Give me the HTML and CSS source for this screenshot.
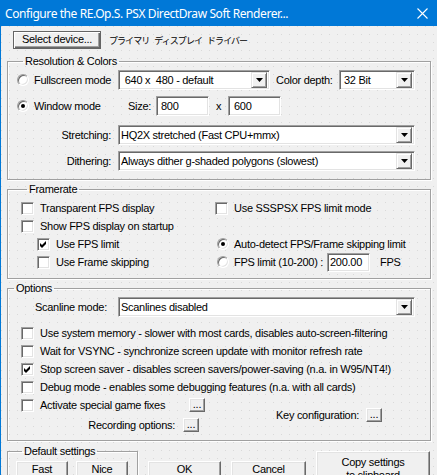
FILE: index.html
```html
<!DOCTYPE html>
<html lang="en">
<head>
<meta charset="utf-8">
<title>Configure</title>
<link rel="stylesheet" href="styles.css">
</head>
<body>
<div class="window">
  <div class="titlebar">
    <span class="title">Configure the RE.Op.S. PSX DirectDraw Soft Renderer...</span>
    <svg class="close" width="11" height="11" viewBox="0 0 11 11"><path d="M0.5 0.5 L10.5 10.5 M10.5 0.5 L0.5 10.5" stroke="#fff" stroke-width="1.1" fill="none"/></svg>
  </div>
  <div class="client">
    <div class="device-row">
      <button class="btn btn-default device-btn">Select device...</button>
      <span class="jp">プライマリ ディスプレイ ドライバー</span>
    </div>

    <fieldset class="group res-group">
      <legend>Resolution &amp; Colors</legend>
      <div class="row">
        <label class="opt mode-fs"><span class="radio"></span>Fullscreen mode</label>
        <div class="combo combo-res"><span class="combo-text">&nbsp;640 x&nbsp; 480 - default</span><span class="drop"><svg width="7" height="4" viewBox="0 0 7 4"><polygon points="0,0 7,0 3.5,4" fill="#000"/></svg></span></div>
        <span class="lbl-depth">Color depth:</span>
        <div class="combo combo-depth"><span class="combo-text">32 Bit</span><span class="drop"><svg width="7" height="4" viewBox="0 0 7 4"><polygon points="0,0 7,0 3.5,4" fill="#000"/></svg></span></div>
      </div>
      <div class="row row-wm">
        <label class="opt mode-wm"><span class="radio on"></span>Window mode</label>
        <span class="lbl-size">Size:</span>
        <div class="edit edit-size">800</div>
        <span class="lbl-x">x</span>
        <div class="edit edit-size edit-600">600</div>
      </div>
      <div class="row row-stretch">
        <span class="lbl-right">Stretching:</span>
        <div class="combo combo-wide"><span class="combo-text">HQ2X stretched (Fast CPU+mmx)</span><span class="drop"><svg width="7" height="4" viewBox="0 0 7 4"><polygon points="0,0 7,0 3.5,4" fill="#000"/></svg></span></div>
      </div>
      <div class="row row-dither">
        <span class="lbl-right">Dithering:</span>
        <div class="combo combo-wide"><span class="combo-text">Always dither g-shaded polygons (slowest)</span><span class="drop"><svg width="7" height="4" viewBox="0 0 7 4"><polygon points="0,0 7,0 3.5,4" fill="#000"/></svg></span></div>
      </div>
    </fieldset>

    <fieldset class="group fr-group">
      <legend>Framerate</legend>
      <div class="fr-grid">
        <label class="cb-item"><span class="check"></span>Transparent FPS display</label>
        <label class="cb-item cb-right"><span class="check"></span>Use SSSPSX FPS limit mode</label>
        <label class="cb-item"><span class="check"></span>Show FPS display on startup</label>
        <span></span>
        <label class="cb-item indent"><span class="check on"><svg width="9" height="9" viewBox="0 0 9 9"><polygon points="1,3 3,5 7,1 7,4 3,8 1,6" fill="#000"/></svg></span>Use FPS limit</label>
        <label class="rb-item"><span class="radio on"></span>Auto-detect FPS/Frame skipping limit</label>
        <label class="cb-item indent"><span class="check"></span>Use Frame skipping</label>
        <div class="rb-item">
          <span class="radio"></span><span class="fps-lbl">FPS limit (10-200) :</span>
          <div class="edit edit-fps">200.00</div>
          <span class="fps-unit">FPS</span>
        </div>
      </div>
    </fieldset>

    <fieldset class="group opt-group">
      <legend>Options</legend>
      <div class="row row-scan">
        <span class="lbl-scan">Scanline mode:</span>
        <div class="combo combo-wide"><span class="combo-text">Scanlines disabled</span><span class="drop"><svg width="7" height="4" viewBox="0 0 7 4"><polygon points="0,0 7,0 3.5,4" fill="#000"/></svg></span></div>
      </div>
      <div class="opt-list">
        <label class="cb-item"><span class="check"></span>Use system memory - slower with most cards, disables auto-screen-filtering</label>
        <label class="cb-item"><span class="check"></span>Wait for VSYNC - synchronize screen update with monitor refresh rate</label>
        <label class="cb-item"><span class="check on"><svg width="9" height="9" viewBox="0 0 9 9"><polygon points="1,3 3,5 7,1 7,4 3,8 1,6" fill="#000"/></svg></span>Stop screen saver - disables screen savers/power-saving (n.a. in W95/NT4!)</label>
        <label class="cb-item"><span class="check"></span>Debug mode - enables some debugging features (n.a. with all cards)</label>
        <div class="cb-item">
          <label class="fixes-lbl"><span class="check"></span>Activate special game fixes</label>
          <button class="btn mini">...</button>
        </div>
      </div>
      <div class="row-extra">
        <div class="rec">
          <span>Recording options:</span>
          <button class="btn mini">...</button>
        </div>
        <div class="keys">
          <span>Key configuration:</span>
          <button class="btn mini">...</button>
        </div>
      </div>
    </fieldset>

    <div class="bottom-row">
      <fieldset class="group def-group">
        <legend>Default settings</legend>
        <div class="def-btns">
          <button class="btn btn-def">Fast</button>
          <button class="btn btn-def">Nice</button>
        </div>
      </fieldset>
      <button class="btn btn-ok">OK</button>
      <button class="btn btn-cancel">Cancel</button>
      <button class="btn btn-copy">Copy settings<br>to clipboard</button>
    </div>
  </div>
</div>
</body>
</html>
```

FILE: styles.css
```css
* { box-sizing: border-box; }
html, body { margin: 0; padding: 0; }
body {
  width: 437px;
  height: 475px;
  overflow: hidden;
  background: #f0f0f0;
  font-family: "Liberation Sans", Arial, sans-serif;
  font-size: 11px;
  letter-spacing: -0.28px;
  color: #000;
}
.window {
  width: 437px;
  height: 475px;
  border-left: 1px solid #0078d7;
  display: flex;
  flex-direction: column;
  overflow: hidden;
}
.titlebar {
  height: 26px;
  flex: none;
  background: #0078d7;
  color: #fff;
  display: flex;
  align-items: center;
  justify-content: space-between;
  padding: 0 9px 0 4px;
  font-family: "Noto Sans", sans-serif;
  font-size: 12px;
  letter-spacing: -0.42px;
}
.close { display: block; }
.client {
  flex: 1;
  padding: 5px 6px 0 6px;
  background-color: #f0f0f0;
  background-image:
    linear-gradient(to bottom, transparent 1px, #f0f0f0 1px),
    linear-gradient(to right, #d9d9d9 1px, #f0f0f0 1px);
  background-size: 8px 8px;
}

/* controls */
.btn {
  font-family: inherit;
  font-size: 11px;
  letter-spacing: inherit;
  color: #000;
  background: #f0f0f0;
  border: 1px solid;
  border-color: #fff #696969 #696969 #fff;
  box-shadow: inset -1px -1px 0 #a0a0a0, inset 1px 1px 0 #e3e3e3;
  padding: 0;
  margin: 0;
  line-height: 13px;
}
.btn-default {
  border: 1px solid #646464;
  box-shadow: inset 1px 1px 0 #fff, inset -1px -1px 0 #696969, inset -2px -2px 0 #a0a0a0;
}
.mini {
  width: 16px;
  height: 14px;
  line-height: 8px;
  font-size: 11px;
  padding-bottom: 2px;
}
.radio {
  flex: none;
  display: inline-block;
  position: relative;
  width: 12px;
  height: 12px;
  border-radius: 50%;
  background: #fff;
  border: 1px solid;
  border-color: #a0a0a0 #fff #fff #a0a0a0;
  box-shadow: inset 1px 1px 0 #696969, inset -1px -1px 0 #e3e3e3;
}
.radio.on::after {
  content: "";
  position: absolute;
  left: 3px;
  top: 3px;
  width: 4px;
  height: 4px;
  border-radius: 50%;
  background: #000;
}
.check {
  flex: none;
  display: inline-flex;
  align-items: center;
  justify-content: center;
  width: 13px;
  height: 13px;
  background: #fff;
  border: 1px solid;
  border-color: #a0a0a0 #fff #fff #a0a0a0;
  box-shadow: inset 1px 1px 0 #696969, inset -1px -1px 0 #e3e3e3;
}
.check svg { display: block; }
.combo {
  position: relative;
  height: 20px;
  background: #fff;
  border: 1px solid;
  border-color: #a0a0a0 #fff #fff #a0a0a0;
  box-shadow: inset 1px 1px 0 #696969, inset -1px -1px 0 #e3e3e3;
  display: flex;
  align-items: center;
  padding: 0 2px 0 3px;
  flex: none;
}
.combo-text { flex: 1; white-space: nowrap; overflow: hidden; }
.drop {
  flex: none;
  width: 16px;
  height: 16px;
  background: #f0f0f0;
  border: 1px solid;
  border-color: #e3e3e3 #696969 #696969 #e3e3e3;
  box-shadow: inset 1px 1px 0 #fff, inset -1px -1px 0 #a0a0a0;
  display: flex;
  align-items: center;
  justify-content: center;
}
.drop svg { display: block; }
.edit {
  height: 20px;
  background: #fff;
  border: 1px solid;
  border-color: #a0a0a0 #fff #fff #a0a0a0;
  box-shadow: inset 1px 1px 0 #696969, inset -1px -1px 0 #e3e3e3;
  display: flex;
  align-items: center;
  padding-left: 4px;
  flex: none;
}

/* groups */
.group {
  margin: 0;
  padding: 0;
  min-width: 0;
  border: 1px solid #a0a0a0;
  box-shadow: inset 1px 1px 0 #fff, 1px 1px 0 #fff;
}
.group legend {
  padding: 0 2px;
  margin-left: 6px;
  line-height: 14px;
  height: 14px;
}
.row { display: flex; align-items: center; height: 20px; }
.opt { display: flex; align-items: center; gap: 5px; flex: none; }

.device-row { display: flex; align-items: center; height: 18px; margin-left: 6px; }
.device-btn { width: 88px; height: 18px; padding-bottom: 1px; }
.jp {
  margin-left: 8px;
  font-family: "Noto Sans CJK JP", sans-serif;
  font-size: 9px;
  letter-spacing: -0.95px;
  word-spacing: 4px;
  white-space: nowrap;
}

.res-group { margin-top: 5px; padding: 2px 0 8px 9px; }
.mode-fs { width: 101px; }
.combo-res { width: 152px; }
.lbl-depth { margin-left: 6px; width: 63px; }
.combo-depth { width: 76px; padding-left: 4px; }
.row-wm { margin-top: 6px; }
.mode-wm { width: 111px; }
.lbl-size { width: 28px; }
.edit-size { width: 53px; }
.edit-600 { padding-left: 5px; }
.lbl-x { width: 19px; text-align: center; }
.row-stretch { margin-top: 9px; }
.row-dither { margin-top: 6px; }
.lbl-right { width: 94px; text-align: right; margin-right: 7px; }
.combo-wide { width: 297px; padding-left: 2px; }

.fr-group { margin-top: 2px; padding: 3px 0 7px 13px; }
.fr-grid {
  display: grid;
  grid-template-columns: 194px auto;
  grid-auto-rows: 18px;
  align-items: center;
}
.cb-item { display: flex; align-items: center; gap: 6px; white-space: nowrap; }
.cb-right { gap: 6px; }
.indent { margin-left: 16px; }
.rb-item { display: flex; align-items: center; gap: 5px; margin-left: 2px; white-space: nowrap; }
.fps-lbl { width: 88px; }
.edit-fps { width: 43px; height: 19px; padding-left: 2px; }
.fps-unit { margin-left: 5px; }

.opt-group { margin-top: 2px; padding: 2px 0 8px 0; }
.row-scan { padding-left: 27px; }
.lbl-scan { width: 83px; }
.opt-list {
  margin-top: 7px;
  padding-left: 13px;
  display: grid;
  grid-auto-rows: 18px;
  align-items: center;
}
.fixes-lbl { display: flex; align-items: center; gap: 6px; width: 162px; }
.row-extra { display: flex; align-items: flex-start; }
.rec {
  width: 191px;
  margin-top: 4px;
  display: flex;
  align-items: center;
  justify-content: flex-end;
  gap: 8px;
}
.keys {
  margin-left: 77px;
  margin-top: -6px;
  display: flex;
  align-items: center;
  gap: 7px;
}

.bottom-row { display: flex; align-items: flex-start; margin-top: 3px; }
.def-group { width: 131px; padding: 3px 0 0 8px; height: 60px; flex: none; }
.def-btns { display: flex; gap: 8px; }
.btn-def, .btn-ok, .btn-cancel {
  height: 23px;
  flex: none;
  line-height: 11px;
  padding: 0 0 7px 0;
}
.btn-def { width: 52px; }
.btn-ok { margin-left: 10px; margin-top: 17px; width: 73px; }
.btn-cancel { margin-left: 10px; margin-top: 17px; width: 75px; }
.btn-copy {
  margin-left: 10px;
  margin-top: 7px;
  width: 114px;
  height: 34px;
  flex: none;
  padding-top: 2px;
  line-height: 13px;
}
```
